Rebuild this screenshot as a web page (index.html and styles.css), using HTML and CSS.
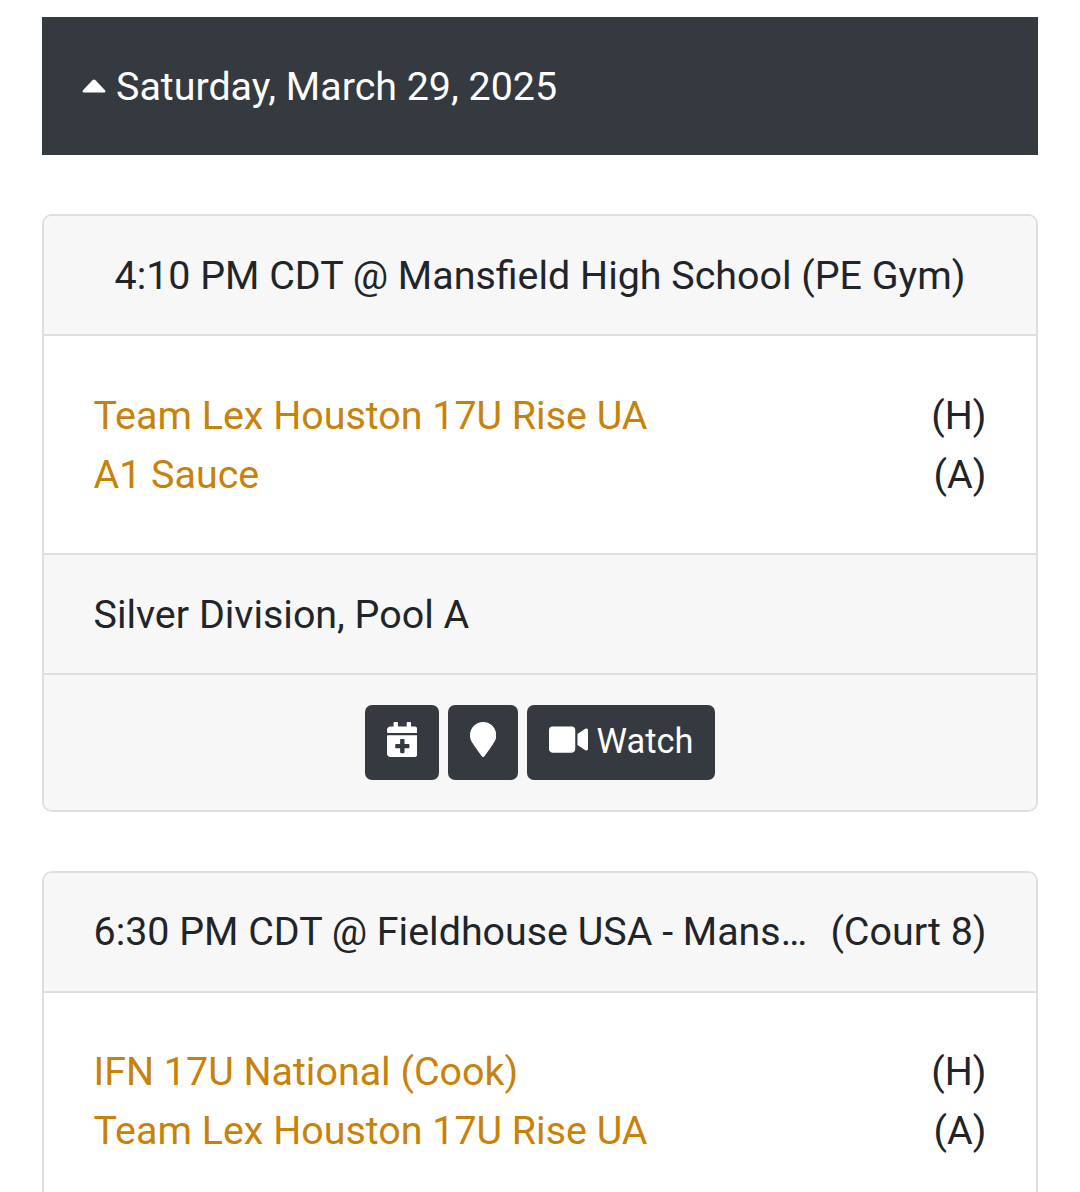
FILE: index.html
```html
<!DOCTYPE html>
<html lang="en">
<head>
<meta charset="utf-8">
<title>Schedule</title>
<link rel="stylesheet" href="styles.css">
</head>
<body>
<main class="schedule">
  <h2 class="day"><svg class="caret" viewBox="0 0 24 14"><path d="M2 13.500Q-.5 13.500 1.200 11L10.500 1.200Q12 0 13.500 1.200L22.800 11Q24.500 13.500 22 13.500Z"/></svg><span>Saturday, March 29, 2025</span></h2>
  <section class="card">
    <header class="card-header centered">4:10 PM CDT @ Mansfield High School (PE Gym)</header>
    <div class="teams">
      <div class="team"><a>Team Lex Houston 17U Rise UA</a><span>(H)</span></div>
      <div class="team"><a>A1 Sauce</a><span>(A)</span></div>
    </div>
    <div class="division">Silver Division, Pool A</div>
    <footer class="actions">
      <button class="btn calendar" aria-label="Add to calendar"><svg viewBox="0 0 448 512"><path d="M436 160H12c-6.600 0-12-5.400-12-12v-36c0-26.500 21.500-48 48-48h48V12c0-6.600 5.400-12 12-12h40c6.600 0 12 5.400 12 12v52h128V12c0-6.600 5.400-12 12-12h40c6.600 0 12 5.400 12 12v52h48c26.500 0 48 21.500 48 48v36c0 6.600-5.400 12-12 12zM12 192h424c6.600 0 12 5.400 12 12v260c0 26.500-21.500 48-48 48H48c-26.500 0-48-21.500-48-48V204c0-6.600 5.400-12 12-12zm316 140c0-6.600-5.400-12-12-12h-60v-60c0-6.600-5.400-12-12-12h-40c-6.600 0-12 5.400-12 12v60h-60c-6.600 0-12 5.400-12 12v40c0 6.600 5.400 12 12 12h60v60c0 6.600 5.400 12 12 12h40c6.600 0 12-5.400 12-12v-60h60c6.600 0 12-5.400 12-12v-40z"/></svg></button>
      <button class="btn marker" aria-label="Map"><svg viewBox="0 0 384 512"><path d="M172.300 501.700C27 291 0 269.400 0 192 0 86 86 0 192 0s192 86 192 192c0 77.400-27 99-172.300 309.700-9.500 13.800-29.900 13.800-39.400 0z"/></svg></button>
      <button class="btn watch"><svg viewBox="0 0 576 512"><path d="M336.200 64H47.800C21.400 64 0 85.400 0 111.800v288.400C0 426.600 21.400 448 47.800 448h288.400c26.400 0 47.800-21.400 47.800-47.800V111.800c0-26.400-21.400-47.800-47.800-47.800zm189.400 37.700L416 177.300v157.400l109.600 75.500c21.200 14.600 50.400-.3 50.400-25.800V127.500c0-25.400-29.100-40.400-50.400-25.800z"/></svg><span>Watch</span></button>
    </footer>
  </section>
  <section class="card">
    <header class="card-header"><span>6:30 PM CDT @ Fieldhouse USA - Mans…</span><span>(Court 8)</span></header>
    <div class="teams">
      <div class="team"><a>IFN 17U National (Cook)</a><span>(H)</span></div>
      <div class="team"><a>Team Lex Houston 17U Rise UA</a><span>(A)</span></div>
    </div>
  </section>
</main>
</body>
</html>
```
FILE: styles.css
```css
* { box-sizing: border-box; }
body {
  margin: 0;
  background: #fff;
  color: #212529;
  font: 39.400px/59px Roboto, sans-serif;
}
.schedule { height: 1192px; overflow: hidden; padding: 17px 42px 0; }
.day {
  display: flex;
  align-items: center;
  gap: 10.500px;
  height: 138px;
  margin: 0 0 59px;
  padding: 0 39.500px;
  background: #343a40;
  color: #fff;
  font: inherit;
}
.caret { width: 24px; height: 14px; fill: currentColor; }
.card {
  margin-bottom: 59px;
  border: 2px solid #dfdfdf;
  border-radius: 10px;
  overflow: hidden;
}
.card-header {
  display: flex;
  justify-content: space-between;
  height: 120px;
  padding: 30px 49.500px 0;
  border-bottom: 2px solid #dfdfdf;
  background: #f7f7f7;
  white-space: nowrap;
}
.centered { justify-content: center; }
.teams { height: 217px; padding: 50px 49.500px 0; }
.team { display: flex; justify-content: space-between; }
.team a { color: #c8820a; }
.card + .card .card-header { padding-top: 29px; }
.card + .card .teams { padding-top: 49px; }
.division {
  height: 120px;
  padding: 30px 49.500px 0;
  border-top: 2px solid #dfdfdf;
  background: #f7f7f7;
}
.actions {
  display: flex;
  justify-content: center;
  gap: 9px;
  height: 137px;
  padding-top: 30px;
  border-top: 2px solid #dfdfdf;
  background: #f7f7f7;
}
.btn {
  display: flex;
  align-items: center;
  justify-content: center;
  height: 75px;
  padding: 0 0 6px;
  border: 0;
  border-radius: 7px;
  background: #343a40;
  color: #fff;
  font: 34.400px/52px Roboto, sans-serif;
}
.btn svg { height: 35px; fill: currentColor; }
.btn span { padding-top: 3px; }
.calendar { width: 74px; }
.marker { width: 70px; }
.watch { width: 188px; gap: 8.500px; }
```
